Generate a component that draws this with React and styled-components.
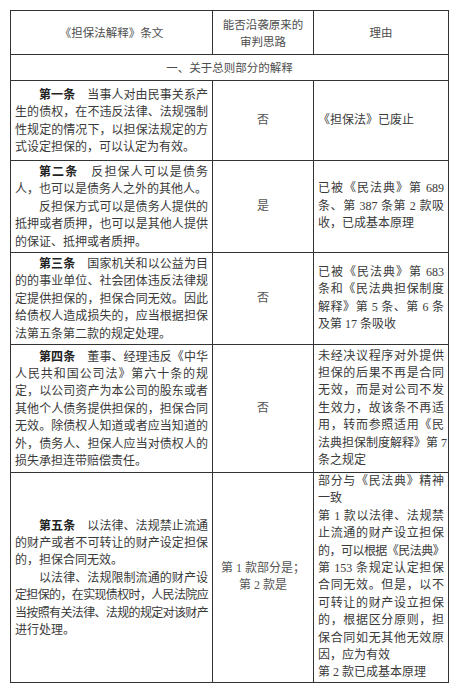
import React from 'react';
import styled, { createGlobalStyle } from 'styled-components';

const GlobalStyle = createGlobalStyle`
    html, body {
        margin: 0;
        padding: 0;
        background: #fff;
    }
    body {
        font-family: "Noto Sans CJK SC", sans-serif;
    }
`;

const Page = styled.div`
    padding: 10px 0 0 10px;
`;

const Table = styled.table`
    border-collapse: collapse;
    table-layout: fixed;
    width: 438px;
`;

const Col = styled.col`
    width: ${p => p.$w}px;
`;

const Row = styled.tr`
    height: ${p => p.$h}px;
`;

const HeadCell = styled.th`
    border: 1px solid #333;
    padding: 0;
    font: 400 11.5px/17px "Noto Sans CJK SC", sans-serif;
    color: #4d4d4d;
    text-align: center;
    vertical-align: middle;
`;

const Cell = styled.td`
    border: 1px solid #333;
    padding: 0 4px;
    vertical-align: middle;
    font: 400 12px/17.4px "Liberation Serif", "Noto Sans CJK SC", serif;
    color: ${p => (p.$soft ? '#555' : '#3a3a3a')};
    text-align: ${p => p.$align || 'left'};
`;

const Line = styled.div`
    white-space: nowrap;
    text-align: ${p => (p.$j ? 'justify' : 'inherit')};
    text-align-last: ${p => (p.$j ? 'justify' : 'auto')};
    padding-left: ${p => (p.$indent ? '2em' : '0')};
    letter-spacing: ${p => (p.$tight ? '-0.7px' : 'normal')};
`;

const Lead = styled.b`
    font-family: "Noto Sans CJK SC", sans-serif;
    font-weight: 700;
    color: #222;
`;

// '!' at the start of a line = squeeze it (punctuation was compressed in the print)
const rows = [
    {
        h: 80,
        left: [{ lead: '第一条', lines: ['当事人对由民事关系产', '生的债权，在不违反法律、法规强制', '性规定的情况下，以担保法规定的方', '式设定担保的，可以认定为有效。'] }],
        mid: ['否'],
        right: [{ lines: ['《担保法》已废止'] }],
    },
    {
        h: 92,
        left: [
            { lead: '第二条', lines: ['反担保人可以是债务', '人，也可以是债务人之外的其他人。'] },
            { lines: ['反担保方式可以是债务人提供的', '抵押或者质押，也可以是其他人提供', '的保证、抵押或者质押。'] },
        ],
        mid: ['是'],
        right: [{ lines: ['已被《民法典》第 689', '条、第 387 条第 2 款吸', '收，已成基本原理'] }],
    },
    {
        h: 92,
        left: [{ lead: '第三条', lines: ['国家机关和以公益为目', '的的事业单位、社会团体违反法律规', '定提供担保的，担保合同无效。因此', '给债权人造成损失的，应当根据担保', '法第五条第二款的规定处理。'] }],
        mid: ['否'],
        right: [{ lines: ['已被《民法典》第 683', '条和《民法典担保制度', '解释》第 5 条、第 6 条', '及第 17 条吸收'] }],
    },
    {
        h: 128,
        left: [{ lead: '第四条', lines: ['董事、经理违反《中华', '人民共和国公司法》第六十条的规', '定，以公司资产为本公司的股东或者', '其他个人债务提供担保的，担保合同', '无效。除债权人知道或者应当知道的', '外，债务人、担保人应当对债权人的', '损失承担连带赔偿责任。'] }],
        mid: ['否'],
        right: [{ lines: ['未经决议程序对外提供', '担保的后果不再是合同', '无效，而是对公司不发', '生效力，故该条不再适', '用，转而参照适用《民', '法典担保制度解释》第 7', '条之规定'] }],
    },
    {
        h: 209,
        left: [
            { lead: '第五条', lines: ['以法律、法规禁止流通', '的财产或者不可转让的财产设定担保', '的，担保合同无效。'] },
            { lines: ['以法律、法规限制流通的财产设', '!定担保的，在实现债权时，人民法院应', '!当按照有关法律、法规的规定对该财产', '进行处理。'] },
        ],
        mid: ['第 1 款部分是；', '第 2 款是'],
        right: [
            { lines: ['部分与《民法典》精神', '一致'] },
            { lines: ['第 1 款以法律、法规禁', '止流通的财产设立担保', '!的，可以根据《民法典》', '第 153 条规定认定担保', '合同无效。但是，以不', '可转让的财产设立担保', '的，根据区分原则，担', '保合同如无其他无效原', '因，应为有效'] },
            { lines: ['第 2 款已成基本原理'] },
        ],
    },
];

const Paragraphs = ({ paras, indent }) =>
    paras.map((p, pi) =>
        p.lines.map((raw, li) => {
            const tight = raw.startsWith('!');
            const text = tight ? raw.slice(1) : raw;
            const last = li === p.lines.length - 1;
            return (
                <Line key={`${pi}-${li}`} $j={!last} $indent={indent && li === 0} $tight={tight}>
                    {li === 0 && p.lead && (
                        <>
                            <Lead>{p.lead}</Lead>
                            {'\u3000'}
                        </>
                    )}
                    {text}
                </Line>
            );
        })
    );

const App = () => (
    <Page>
        <GlobalStyle />
        <Table>
            <colgroup>
                <Col $w={202} />
                <Col $w={101} />
                <Col $w={135} />
            </colgroup>
            <thead>
                <Row $h={44}>
                    <HeadCell>《担保法解释》条文</HeadCell>
                    <HeadCell>
                        能否沿袭原来的
                        <br />
                        审判思路
                    </HeadCell>
                    <HeadCell>理由</HeadCell>
                </Row>
            </thead>
            <tbody>
                <Row $h={26}>
                    <HeadCell colSpan={3}>一、关于总则部分的解释</HeadCell>
                </Row>
                {rows.map((r, i) => (
                    <Row key={i} $h={r.h}>
                        <Cell>
                            <Paragraphs paras={r.left} indent />
                        </Cell>
                        <Cell $align="center" $soft>
                            {r.mid.map(t => (
                                <Line key={t}>{t}</Line>
                            ))}
                        </Cell>
                        <Cell>
                            <Paragraphs paras={r.right} />
                        </Cell>
                    </Row>
                ))}
            </tbody>
        </Table>
    </Page>
);

export default App;
